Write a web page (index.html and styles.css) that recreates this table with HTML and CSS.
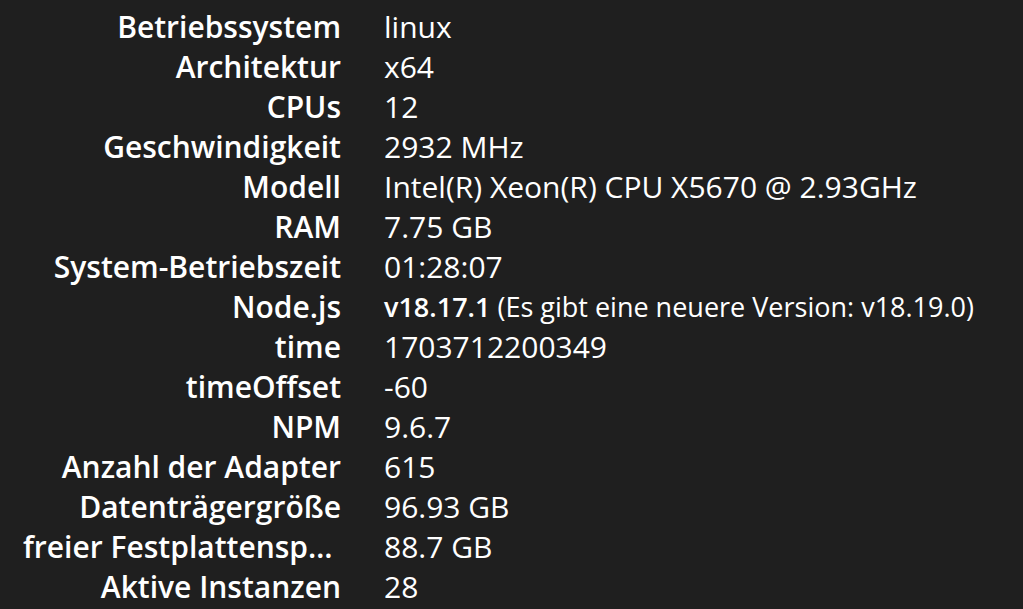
FILE: index.html
```html
<!DOCTYPE html>
<html lang="de">
<head>
<meta charset="utf-8">
<link rel="stylesheet" href="styles.css">
</head>
<body>
<div class="info">
  <div class="row"><div class="label">Betriebssystem</div><div class="value">linux</div></div>
  <div class="row"><div class="label">Architektur</div><div class="value">x64</div></div>
  <div class="row"><div class="label">CPUs</div><div class="value">12</div></div>
  <div class="row"><div class="label">Geschwindigkeit</div><div class="value">2932 MHz</div></div>
  <div class="row"><div class="label">Modell</div><div class="value">Intel(R) Xeon(R) CPU X5670 @ 2.93GHz</div></div>
  <div class="row"><div class="label">RAM</div><div class="value">7.75 GB</div></div>
  <div class="row"><div class="label">System-Betriebszeit</div><div class="value">01:28:07</div></div>
  <div class="row"><div class="label">Node.js</div><div class="value small"><b>v18.17.1</b> (Es gibt eine neuere Version: v18.19.0)</div></div>
  <div class="row"><div class="label">time</div><div class="value">1703712200349</div></div>
  <div class="row"><div class="label">timeOffset</div><div class="value">-60</div></div>
  <div class="row"><div class="label">NPM</div><div class="value">9.6.7</div></div>
  <div class="row"><div class="label">Anzahl der Adapter</div><div class="value">615</div></div>
  <div class="row"><div class="label">Datenträgergröße</div><div class="value">96.93 GB</div></div>
  <div class="row"><div class="label">freier Festplattenspeicher</div><div class="value">88.7 GB</div></div>
  <div class="row"><div class="label">Aktive Instanzen</div><div class="value">28</div></div>
</div>
</body>
</html>
```
FILE: styles.css
```css
html, body {
  margin: 0;
  padding: 0;
  background: #1f1f1f;
  color: #ffffff;
  font-family: "Open Sans", "Noto Sans", sans-serif;
}
.info {
  display: flex;
  flex-direction: column;
  padding: 7px 0 0 23px;
}
.row {
  display: grid;
  grid-template-columns: 318px 1fr;
  column-gap: 43px;
  height: 40px;
  align-items: center;
  font-size: 30px;
  line-height: 40px;
}
.label {
  font-weight: 600;
  text-align: right;
  white-space: nowrap;
  overflow: hidden;
  text-overflow: ellipsis;
}
.value {
  white-space: nowrap;
}
.value b {
  font-weight: 600;
}
.small {
  font-size: 27px;
}
```
